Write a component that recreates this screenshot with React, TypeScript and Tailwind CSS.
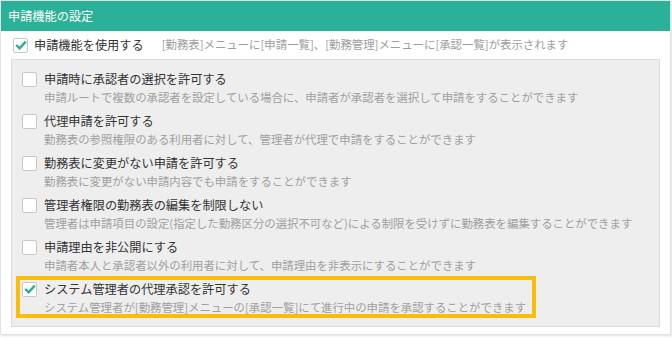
import React from "react";

const FONT = { fontFamily: '"Noto Sans CJK JP", "Noto Sans", sans-serif' };

function Box({ checked }: { checked?: boolean }) {
  return (
    <span className="flex h-[15px] w-[15px] shrink-0 items-center justify-center rounded-[2px] border border-[#c8c8c8] bg-white">
      {checked && (
        <svg width="12" height="10" viewBox="0 0 12 10" fill="none">
          <path d="M1.2 5 L4.6 8.2 L10.8 1.6" stroke="#2aae94" strokeWidth="2.4" />
        </svg>
      )}
    </span>
  );
}

const rows = [
  { t: "申請時に承認者の選択を許可する", d: "申請ルートで複数の承認者を設定している場合に、申請者が承認者を選択して申請をすることができます" },
  { t: "代理申請を許可する", d: "勤務表の参照権限のある利用者に対して、管理者が代理で申請をすることができます" },
  { t: "勤務表に変更がない申請を許可する", d: "勤務表に変更がない申請内容でも申請をすることができます" },
  { t: "管理者権限の勤務表の編集を制限しない", d: "管理者は申請項目の設定(指定した勤務区分の選択不可など)による制限を受けずに勤務表を編集することができます" },
  { t: "申請理由を非公開にする", d: "申請者本人と承認者以外の利用者に対して、申請理由を非表示にすることができます" },
  { t: "システム管理者の代理承認を許可する", d: "システム管理者が[勤務管理]メニューの[承認一覧]にて進行中の申請を承認することができます", checked: true, hl: true },
];

export default function App() {
  return (
    <div className="h-[340px] w-[672px] bg-white" style={FONT}>
      <div className="h-[335px] w-[671px] border border-[#e2e2e2] bg-white shadow-[1px_1px_2px_rgba(0,0,0,0.12)]">
        <div className="flex h-[30px] items-center bg-[#2bb197] pl-[7px] text-[12.2px] text-white">申請機能の設定</div>
        <div className="flex h-[28px] items-center pl-[12px]">
          <Box checked />
          <span className="ml-[6px] text-[12.2px] text-[#333]">申請機能を使用する</span>
          <span className="ml-[18px] text-[11.4px] text-[#9d9d9d]">[勤務表]メニューに[申請一覧]、[勤務管理]メニューに[承認一覧]が表示されます</span>
        </div>
        <div className="ml-[10px] mr-[10px] border border-[#dcdcdc] bg-[#eeeeee] pb-[8px] pt-[6px]">
          {rows.map((r, i) => (
            <div
              key={i}
              className={
                "ml-[4px] w-fit border-[4px] pl-[2px] pr-[6px] " +
                (r.hl ? "border-[#fcbc0c]" : "border-transparent")
              }
            >
              <div className="flex h-[18px] items-center">
                <Box checked={r.checked} />
                <span className="ml-[7px] text-[12.2px] leading-none text-[#333]">{r.t}</span>
              </div>
              <div className="h-[16px] whitespace-nowrap pl-[22px] pt-[4px] text-[11.4px] leading-none text-[#a0a0a0]">{r.d}</div>
            </div>
          ))}
        </div>
      </div>
    </div>
  );
}
